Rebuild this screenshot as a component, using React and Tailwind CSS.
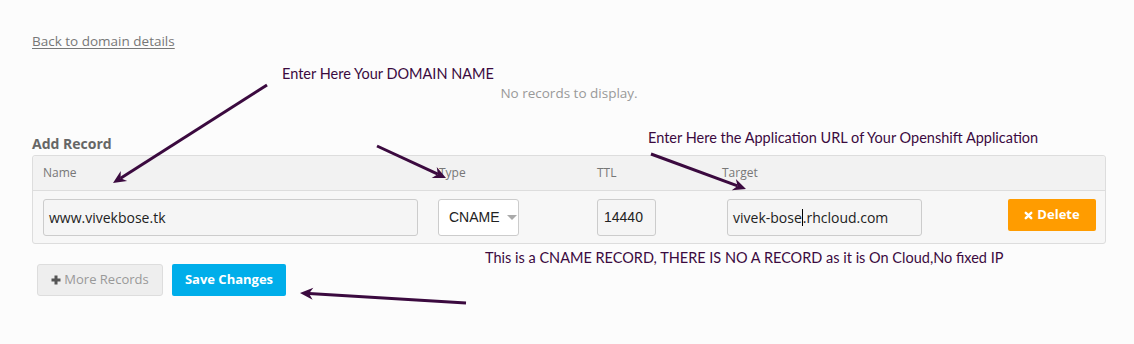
import React from 'react';

const Arrow = ({ x1, y1, x2, y2 }) => {
    const a = Math.atan2(y2 - y1, x2 - x1);
    const L = 13, W = 6;
    const bx = x2 - L * Math.cos(a), by = y2 - L * Math.sin(a);
    const p1 = `${bx + W * Math.sin(a)},${by - W * Math.cos(a)}`;
    const p2 = `${bx - W * Math.sin(a)},${by + W * Math.cos(a)}`;
    const ix = x2 - 9 * Math.cos(a), iy = y2 - 9 * Math.sin(a);
    return (
        <g>
            <line x1={x1} y1={y1} x2={ix} y2={iy} stroke="#3b0a3f" strokeWidth="3" />
            <polygon points={`${x2},${y2} ${p1} ${ix},${iy} ${p2}`} fill="#3b0a3f" />
        </g>
    );
};

const App = () => {
    return (
        <div className="relative w-[1134px] h-[344px] bg-[#fcfcfc] overflow-hidden font-['Open_Sans',sans-serif]">
            <div className="pl-8 pr-7 pt-[28px]">
                <a className="text-[13.5px] text-[#777] underline underline-offset-2 leading-[20px]">Back to domain details</a>

                <div className="mt-[31px] h-[20px] text-center text-[13.5px] text-[#999] leading-[20px]">No records to display.</div>

                <div className="mt-[31px] text-[14px] font-bold text-[#666] leading-[20px]">Add Record</div>

                <div className="mt-[1px] w-[1074px] border border-[#ddd] rounded-[3px] bg-[#f7f7f7]">
                    <div className="flex h-[35px] items-center bg-[#f2f2f2] border-b border-[#ddd] text-[12px] text-[#777] rounded-t-[3px]">
                        <div className="w-[406px] pl-[10px]">Name</div>
                        <div className="w-[158px]">Type</div>
                        <div className="w-[125px]">TTL</div>
                        <div className="flex-1">Target</div>
                    </div>
                    <div className="flex h-[52px] pt-[8px] items-start">
                        <div className="w-[405px] pl-[10px]">
                            <div className="w-[375px] h-[37px] border border-[#ccc] rounded-[3px] bg-[#f5f5f5] flex items-center pl-[5px] text-[14px] text-[#222]">www.vivekbose.tk</div>
                        </div>
                        <div className="w-[159px]">
                            <div className="w-[81px] h-[37px] border border-[#ccc] rounded-[3px] bg-white flex items-center pl-[10px] gap-[7px] text-[14px] text-[#222] font-['Liberation_Sans',sans-serif]">
                                CNAME
                                <span className="w-0 h-0 border-l-[5px] border-r-[5px] border-t-[5px] border-l-transparent border-r-transparent border-t-[#aaa]" />
                            </div>
                        </div>
                        <div className="w-[130px]">
                            <div className="w-[59px] h-[37px] border border-[#ccc] rounded-[3px] bg-[#f5f5f5] flex items-center pl-[6px] text-[14px] text-[#222] font-['Liberation_Sans',sans-serif]">14440</div>
                        </div>
                        <div className="w-[281px]">
                            <div className="w-[195px] h-[37px] border border-[#ccc] rounded-[3px] bg-[#f5f5f5] flex items-center pl-[5px] text-[14px] text-[#222]">
                                vivek-bose<span className="inline-block w-px h-[17px] bg-black" />.rhcloud.com
                            </div>
                        </div>
                        <button className="w-[88px] h-[32px] bg-[#ff9c00] rounded-[2px] text-white text-[13px] font-bold flex items-center justify-center gap-[4px]">
                            <svg width="9" height="9" viewBox="0 0 10 10"><path d="M2 2L8 8M8 2L2 8" stroke="white" strokeWidth="2.8" strokeLinecap="round" /></svg>
                            Delete
                        </button>
                    </div>
                </div>

                <div className="mt-[20px] ml-[5px] flex gap-[9px]">
                    <button className="w-[126px] h-[32px] bg-[#eee] border border-[#ddd] rounded-[3px] text-[13px] text-[#999] flex items-center justify-center gap-[3px]">
                        <svg width="10" height="10" viewBox="0 0 10 10"><path d="M5 0.5V9.5M0.5 5H9.5" stroke="#555" strokeWidth="3" /></svg>
                        More Records
                    </button>
                    <button className="w-[114px] h-[32px] bg-[#00aeea] rounded-[2px] text-[13px] text-white font-bold">Save Changes</button>
                </div>
            </div>

            <div className="absolute left-[282px] top-[64px] text-[14.5px] leading-[20px] text-[#3b0a3f] font-['Lato',sans-serif]">Enter Here Your DOMAIN NAME</div>
            <div className="absolute left-[648px] top-[128px] text-[14.5px] leading-[20px] text-[#3b0a3f] font-['Lato',sans-serif]">Enter Here the Application URL of Your Openshift Application</div>
            <div className="absolute left-[485px] top-[248px] text-[14.5px] leading-[20px] text-[#3b0a3f] font-['Lato',sans-serif]">This is a CNAME RECORD, THERE IS NO A RECORD as it is On Cloud,No fixed IP</div>

            <svg className="absolute inset-0 pointer-events-none" width="1134" height="344">
                <Arrow x1={267} y1={85} x2={113} y2={183} />
                <Arrow x1={377} y1={146} x2={446} y2={178} />
                <Arrow x1={651} y1={154} x2={746} y2={189} />
                <Arrow x1={466} y1={303} x2={300} y2={293} />
            </svg>
        </div>
    );
};

export default App;
